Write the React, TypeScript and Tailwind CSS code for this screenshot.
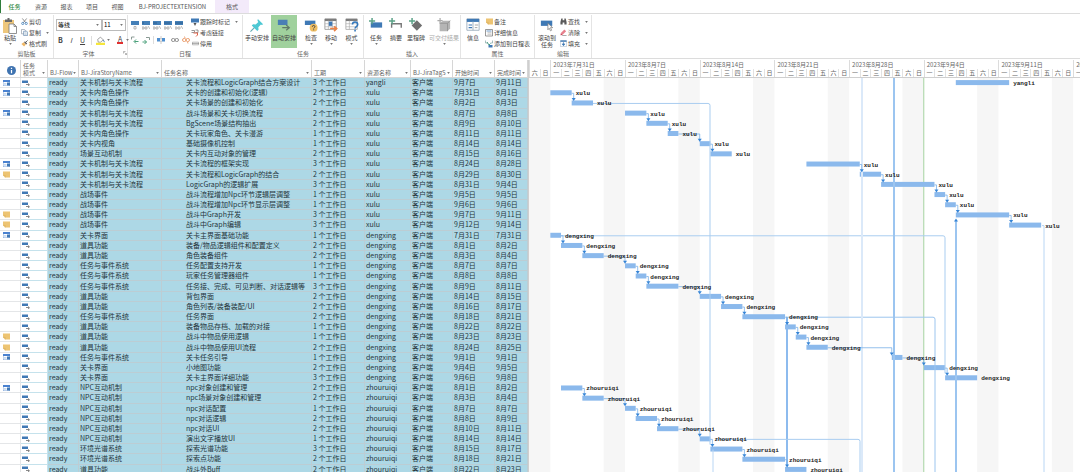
import React from "react";
import { clsx } from "clsx";

type Marker = "cal" | "note" | "";
type Task = {
  marker: Marker;
  story: string;
  name: string;
  days: number;
  owner: string;
  start: string;
  end: string;
};

const DAY = 10.67;
const ROW = 397 / 39;

const FLOW = "关卡机制与关卡流程";
const ROLE = "关卡内角色操作";
const EVENT = "任务与事件系统";
const ITEM = "道具功能";
const NPC = "NPC互动机制";

const RAW: [Marker, string, string, number, string, string, string][] = [
  ["cal", FLOW, "关卡流程和LogicGraph结合方案设计", 3, "yangli", "9/7", "9/11"],
  ["cal", ROLE, "关卡的创建和初始化(逻辑)", 2, "xulu", "7/31", "8/1"],
  ["", ROLE, "关卡场景的创建和初始化", 2, "xulu", "8/2", "8/3"],
  ["cal", FLOW, "战斗场景和关卡切换流程", 2, "xulu", "8/7", "8/8"],
  ["", FLOW, "BgScene场景结构抽出", 2, "xulu", "8/9", "8/10"],
  ["", ROLE, "关卡玩家角色、关卡漫游", 1, "xulu", "8/11", "8/11"],
  ["", "关卡内视角", "基础摄像机控制", 1, "xulu", "8/14", "8/14"],
  ["", "场景互动机制", "关卡内互动对象的管理", 2, "xulu", "8/15", "8/16"],
  ["cal", FLOW, "关卡流程的框架实现", 3, "xulu", "8/24", "8/28"],
  ["note", FLOW, "关卡流程和LogicGraph的结合", 2, "xulu", "8/29", "8/30"],
  ["", FLOW, "LogicGraph的逻辑扩展", 3, "xulu", "8/31", "9/4"],
  ["", "战场事件", "战斗流程增加Npc环节逻辑层调整", 1, "xulu", "9/5", "9/5"],
  ["", "战场事件", "战斗流程增加Npc环节显示层调整", 1, "xulu", "9/6", "9/6"],
  ["note", "战场事件", "战斗中Graph开发", 3, "xulu", "9/7", "9/11"],
  ["note", "战场事件", "战斗中Graph编辑", 3, "xulu", "9/12", "9/14"],
  ["cal", "关卡界面", "关卡主界面基础功能", 1, "dengxing", "7/31", "7/31"],
  ["", ITEM, "装备/物品逻辑组件和配置定义", 2, "dengxing", "8/1", "8/2"],
  ["", ITEM, "角色装备组件", 2, "dengxing", "8/3", "8/4"],
  ["", EVENT, "任务配置支持开发", 1, "dengxing", "8/7", "8/7"],
  ["", EVENT, "玩家任务管理器组件", 1, "dengxing", "8/8", "8/8"],
  ["", EVENT, "任务接、完成、可见判断、对话逻辑等", 3, "dengxing", "8/9", "8/11"],
  ["", ITEM, "背包界面", 2, "dengxing", "8/14", "8/15"],
  ["", ITEM, "角色列表/装备装配/UI", 2, "dengxing", "8/16", "8/17"],
  ["", EVENT, "任务界面", 2, "dengxing", "8/18", "8/21"],
  ["", ITEM, "装备物品存档、加载的对接", 1, "dengxing", "8/22", "8/22"],
  ["note", ITEM, "战斗中物品使用逻辑", 1, "dengxing", "8/23", "8/23"],
  ["note", ITEM, "战斗中物品使用UI流程", 2, "dengxing", "8/24", "8/25"],
  ["cal", EVENT, "关卡任务引导", 1, "dengxing", "9/1", "9/1"],
  ["", "关卡界面", "小地图功能", 2, "dengxing", "9/4", "9/5"],
  ["", "关卡界面", "关卡主界面详细功能", 3, "dengxing", "9/6", "9/8"],
  ["cal", NPC, "npc对象创建和管理", 2, "zhouruiqi", "8/1", "8/2"],
  ["", NPC, "npc场景对象创建和管理", 2, "zhouruiqi", "8/3", "8/4"],
  ["", NPC, "npc对话配置", 1, "zhouruiqi", "8/7", "8/7"],
  ["", NPC, "npc对话逻辑", 2, "zhouruiqi", "8/8", "8/9"],
  ["", NPC, "npc对话UI", 2, "zhouruiqi", "8/10", "8/11"],
  ["", NPC, "演出文字播放UI", 1, "zhouruiqi", "8/14", "8/14"],
  ["", "环境光谱系统", "探索光谱功能", 3, "zhouruiqi", "8/15", "8/17"],
  ["", "环境光谱系统", "探索点功能", 2, "zhouruiqi", "8/18", "8/21"],
  ["", ITEM, "战斗外Buff", 2, "zhouruiqi", "8/22", "8/23"],
];

const TASKS: Task[] = RAW.map(([marker, story, name, days, owner, start, end]) => ({
  marker, story, name, days, owner, start, end,
}));

// tasks that do not lead into the row below them
const CHAIN_ENDS = [0, 2, 7, 14, 29, 38];

const WEEKS = ["2023年7月31日", "2023年8月7日", "2023年8月14日", "2023年8月21日", "2023年8月28日", "2023年9月4日", "2023年9月11日", "2023年9月18日"];
const WEEKDAYS = ["一", "二", "三", "四", "五", "六", "日"];

const zhDate = (d: string) => d.replace("/", "月") + "日";

/** Days since Saturday 29 July, the first day on the time scale. */
const dayIndex = (d: string) => {
  const [m, n] = d.split("/").map(Number);
  return (m === 7 ? n : m === 8 ? n + 31 : n + 62) - 29;
};

/* ---------- small drawings ---------- */

const Caret = ({ className }: { className?: string }) => (
  <svg viewBox="0 0 4 3" className={clsx("h-[2px] w-[3px] shrink-0", className)} aria-hidden="true">
    <path d="M0 0h4L2 3z" fill="#777" />
  </svg>
);

const Svg = ({ className, box = "0 0 16 16", children }: { className?: string; box?: string; children: React.ReactNode }) => (
  <svg viewBox={box} className={clsx("shrink-0", className ?? "size-[7px]")} fill="none" aria-hidden="true">
    {children}
  </svg>
);

const PasteIcon = () => (
  <Svg className="h-4 w-[14px]" box="0 0 14 16">
    <path d="M0 2h11v13H0z" fill="#eec77c" />
    <path d="M2 1.500h2.500V0h2v1.500H9V4H2z" fill="#6a6a6a" />
    <path d="M6 6h5l2.500 2.500V15.500H6z" fill="#fff" stroke="#777" strokeWidth=".8" />
    <path d="M11 6v2.500h2.500" stroke="#777" strokeWidth=".8" />
  </Svg>
);
const CutIcon = () => (
  <Svg>
    <path d="M3 1l8 10M13 1L5 11" stroke="#777" strokeWidth="1.800" />
    <circle cx="4" cy="12.500" r="2.500" stroke="#3d7cb8" strokeWidth="1.800" />
    <circle cx="12" cy="12.500" r="2.500" stroke="#3d7cb8" strokeWidth="1.800" />
  </Svg>
);
const CopyIcon = () => (
  <Svg>
    <path d="M1 1h7l2 2v8H1z" fill="#fff" stroke="#8893a0" strokeWidth="1.500" />
    <path d="M6 5h7l2 2v8H6z" fill="#fff" stroke="#5b82a8" strokeWidth="1.500" />
    <path d="M8 9h5M8 12h5" stroke="#5b82a8" />
  </Svg>
);
const BrushIcon = () => (
  <Svg>
    <path d="M1 9l5-4 5 5-4 5z" fill="#eeb766" />
    <path d="M7 5l2-2 5 5-2 2z" fill="#555" />
    <path d="M11 5l4-4" stroke="#555" strokeWidth="2" />
  </Svg>
);
const PinIcon = () => (
  <Svg className="size-[14px]">
    <path d="M9 1l6 6-1.500 1-1-.5-3 3 .3 3-1.500 1.300L2 8.500 3.500 7l3 .5 3-3L8.500 3z" fill="#4dc8d4" />
    <path d="M5 11l-4.500 4.500" stroke="#62aab4" strokeWidth="1.300" />
  </Svg>
);
const AutoIcon = () => (
  <Svg className="size-[14px]">
    <path d="M1 2h11v6H1z" fill="#4a7fb5" />
    <path d="M6 11h7M10.500 8l3.500 3-3.500 3" stroke="#607a68" strokeWidth="1.500" />
  </Svg>
);
const InspectIcon = () => (
  <Svg className="size-[14px]">
    <path d="M1 3h12v5H1z" fill="#3f79b5" />
    <circle cx="11" cy="11" r="4.500" fill="#eebd62" />
    <path d="M9.500 10c0-2 3-2 3 0 0 1-1.500 1-1.500 2M11 13v1" stroke="#444" strokeWidth="1.100" />
  </Svg>
);
const CalendarArrowIcon = () => (
  <Svg className="size-[14px]">
    <path d="M1 1h13v12H1z" fill="#fff" stroke="#999" />
    <path d="M1 1h13v2.500H1z" fill="#7c7c7c" />
    <path d="M1 6.500h13M1 10h13M5 3v10M9.500 3v10" stroke="#aaa" strokeWidth=".7" />
    <path d="M5.500 4h4v5h-4z" fill="#3f79b5" />
    <path d="M7 12h7M11.500 9.500L14.500 12l-3 3" stroke="#ec8246" strokeWidth="1.800" />
  </Svg>
);
const ModeIcon = () => (
  <Svg className="size-[14px]">
    <path d="M1 1h13v12H1z" fill="#fff" stroke="#aaa" />
    <path d="M1 1h13v2.500H1z" fill="#7c7c7c" />
    <path d="M1 6.500h13M1 10h13M5 3v10" stroke="#aaa" strokeWidth=".7" />
    <path d="M8.500 7.500c0-4 6-4 6 0 0 2.500-3 2-3 4.500M11.500 13.500v2" stroke="#3277bb" strokeWidth="1.800" />
  </Svg>
);
const Plus = () => <path d="M3.500 0v7M0 3.500h7" stroke="#5aa287" strokeWidth="1.700" />;
const NewTaskIcon = () => (
  <Svg className="size-[14px]"><path d="M2 5h13v6H2z" fill="#3f79b5" /><Plus /></Svg>
);
const SummaryIcon = () => (
  <Svg className="size-[14px]"><path d="M3 11V6.500h11V11" stroke="#777" strokeWidth="1.600" /><Plus /></Svg>
);
const MilestoneIcon = () => (
  <Svg className="size-[14px]"><path d="M9 2.500l6 6-6 6-6-6z" fill="#6f6f6f" /><Plus /></Svg>
);
const DeliverableIcon = () => (
  <Svg className="size-[14px]">
    <path d="M3 6l4-3h8v9l-3 3H3z" fill="#b5b5b5" />
    <path d="M3 6h9v9M12 6l3-3" stroke="#929292" />
    <path d="M3.500 0v6M.5 3h6" stroke="#aaa" strokeWidth="1.400" />
  </Svg>
);
const InfoPanelIcon = () => (
  <Svg className="size-[14px]">
    <path d="M1 1h14v13H1z" fill="#fff" stroke="#9aabbb" />
    <path d="M1 1h14v3.500H1z" fill="#3f79b5" />
    <path d="M3 8h4M3 11h4" stroke="#3f79b5" strokeWidth="1.400" />
    <path d="M8 4v10" stroke="#9aabbb" />
    <path d="M10 8h4M10 11h3" stroke="#999" />
  </Svg>
);
const NoteIcon = () => (
  <Svg><path d="M0 1h16v14H5l-5-5z" fill="#edc473" /><path d="M0 10h5v5" stroke="#d3a75a" /></Svg>
);
const DetailIcon = () => (
  <Svg className="size-2">
    <path d="M1 1h14v13H1z" fill="#fff" stroke="#777" strokeWidth="1.500" />
    <path d="M3 4h10" stroke="#3f79b5" strokeWidth="1.500" /><path d="M5 7.500h8M5 10.500h8" stroke="#888" />
  </Svg>
);
const TimelineIcon = () => (
  <Svg className="size-2">
    <path d="M1 1v5h5M15 1v5h-4" stroke="#8aa" strokeWidth="1.500" />
    <path d="M4 4l4 6 3-3" stroke="#3f9b7c" strokeWidth="1.800" />
    <path d="M7 10h8v5H7z" fill="#3f79b5" />
  </Svg>
);
const ScrollIcon = () => (
  <Svg className="size-[14px]">
    <path d="M1 3h13v6H1z" fill="#3f79b5" />
    <path d="M9 6l5.500 5h-2.500l1.300 3-1.300.7-1.500-3L9 13.500z" fill="#fff" stroke="#777" strokeWidth=".8" />
  </Svg>
);
const FindIcon = () => (
  <Svg><path d="M3 1h3v4h4V1h3l2 8v6h-5v-5H6v5H1V9z" fill="#5a5a5a" /></Svg>
);
const ClearIcon = () => (
  <Svg><path d="M2 9l8-8 4 4-8 8z" fill="#e8808c" /><path d="M2 9l4 4-3 1H1z" fill="#c94a5c" /><path d="M5 15h10" stroke="#777" strokeWidth="1.500" /></Svg>
);
const FillIcon = () => (
  <Svg><path d="M1 2h14M1 15h14V2H1z" stroke="#8aa4bd" /><path d="M1 1h14v3H1z" fill="#3f79b5" /><path d="M8 5v6M5 9l3 4 3-4z" stroke="#3f79b5" strokeWidth="1.600" fill="#3f79b5" /></Svg>
);
const TrackIcon = () => (
  <Svg className="size-2"><path d="M0 1h16v8H0z" fill="#3f79b5" /><path d="M5 10h6l-3 6z" fill="#555" /></Svg>
);
const RespectIcon = () => (
  <Svg className="size-2"><path d="M1 3h6v4H1M9 2h5v5H9" stroke="#777" strokeWidth="1.500" /><path d="M5 8h8v4l-3 3" stroke="#e0624a" strokeWidth="2" /></Svg>
);
const InactiveIcon = () => (
  <Svg><path d="M1 5h14v6H1z" stroke="#888" strokeWidth="1.300" /><path d="M0 8h16" stroke="#888" strokeWidth="1.500" /></Svg>
);
const PercentIcon = ({ done }: { done: number }) => (
  <Svg className="h-[9px] w-2" box="0 0 8 9">
    <path d="M0 0h8v4H0z" fill="#4580b8" />
    <path d={done ? "M0 6h2v2H0zM3 6h2v2H3zM6 5l2 3" : "M3 5.500h2v2.500H3z"} stroke="#9a9a9a" strokeWidth=".7" />
    {done > 0 && <path d={`M0 2h${done / 12.5}`} stroke="#2e5f8f" />}
  </Svg>
);
const IndentIcon = ({ right }: { right?: boolean }) => (
  <Svg className="size-2">
    {right ? (
      <path d="M1 12h8M5 8l4 4-4 4" stroke="#4aa07a" strokeWidth="2" />
    ) : (
      <path d="M15 11H7M10 7l-4 4 4 4" stroke="#4aa07a" strokeWidth="2" />
    )}
    <path d={right ? "M8 3h7v5" : "M1 7V2h6"} stroke="#8a9a94" strokeWidth="2" />
  </Svg>
);
const SplitIcon = () => (
  <Svg className="size-2"><path d="M0 4h6v7H0zM10 4h6v7h-6z" fill="#4f8fd0" /><path d="M8 1v14" stroke="#555" strokeWidth="1.200" strokeDasharray="2 1" /></Svg>
);
const LinkIcon = ({ broken }: { broken?: boolean }) => (
  <Svg className="size-2">
    <rect x="1" y="5" width="7" height="6" rx="3" stroke={broken ? "#e58a52" : "#777"} strokeWidth="1.600" />
    <rect x="8" y="5" width="7" height="6" rx="3" stroke={broken ? "#e58a52" : "#777"} strokeWidth="1.600" />
    {broken && <path d="M5 1l1 3M11 12l1 3" stroke="#e58a52" strokeWidth="1.500" />}
  </Svg>
);
const BucketIcon = () => (
  <Svg className="size-[9px]"><path d="M3 6l5-4 5 5-5 4H4z" fill="#fff" stroke="#777" strokeWidth="1.200" /><path d="M13 7l2 4" stroke="#3f79b5" strokeWidth="1.500" /><path d="M0 12h16v4H0z" fill="#f5e63c" /></Svg>
);

/* ---------- ribbon ---------- */

const Group = ({ label, width, launcher, children }: { label: string; width: string; launcher?: boolean; children: React.ReactNode }) => (
  <section aria-label={label} className={clsx("flex shrink-0 flex-col border-r border-[#e4e4e4]", width)}>
    <div className="flex h-[34px]">{children}</div>
    <div className="flex h-2 items-center">
      <span className="flex-1 text-center text-[#666]">{label}</span>
      {launcher && (
        <button aria-label="字体设置" className="w-1">
          <Svg className="size-1"><path d="M2 10V2h8M6 6l8 8M14 8v6H8" stroke="#777" strokeWidth="2" /></Svg>
        </button>
      )}
    </div>
  </section>
);

type BigProps = { icon: React.ReactNode; label: string; caret?: boolean; active?: boolean; muted?: boolean; className: string };
const BigButton = ({ icon, label, caret, active, muted, className }: BigProps) => (
  <button className={clsx("flex h-[33px] shrink-0 flex-col items-center pt-[3px]", className, active && "bg-[#a0d19d]", muted ? "text-[#aaa]" : "text-[#444]")}>
    <span className="flex h-4 items-start">{icon}</span>
    <span className="whitespace-pre-line leading-[7px]">{label}</span>
    {caret && <Caret className="mt-[2px]" />}
  </button>
);

const SmallButton = ({ icon, label, caret }: { icon: React.ReactNode; label: string; caret?: boolean }) => (
  <button className="flex h-[11px] items-center gap-px text-[#444]">
    <span className="flex w-2 justify-center">{icon}</span>
    <span>{label}</span>
    {caret && <Caret className="ml-1" />}
  </button>
);

const SmallStack = ({ children }: { children: React.ReactNode }) => (
  <div className="flex flex-col pt-px">{children}</div>
);

const Ribbon = () => (
  <div className="flex h-[45px] overflow-hidden border-b border-[#dcdcdc] pt-px text-[6px] leading-[7px]">
    <Group label="剪贴板" width="w-[54px]">
      <BigButton icon={<PasteIcon />} label="粘贴" caret className="w-5" />
      <SmallStack>
        <SmallButton icon={<CutIcon />} label="剪切" />
        <SmallButton icon={<CopyIcon />} label="复制" caret />
        <SmallButton icon={<BrushIcon />} label="格式刷" />
      </SmallStack>
    </Group>
    <Group label="字体" width="w-[74px]" launcher>
      <div className="flex flex-col gap-1 px-[2px] pt-1">
        <div className="flex">
          {[["字体名称", "等线", "w-[46px]"], ["字号", "11", "w-6"]].map(([label, value, w]) => (
            <label key={label} className={clsx("relative flex items-center border border-[#bbb]", w)}>
              <select aria-label={label} className="h-[10px] w-full appearance-none pl-px text-[6px] leading-[8px] text-black">
                <option>{value}</option>
              </select>
              <Caret className="absolute right-[2px]" />
            </label>
          ))}
        </div>
        <div className="flex h-[10px] items-center gap-[7px] pl-[2px] text-[7px] text-[#444]">
          <button className="w-1 font-bold">B</button>
          <button className="w-1 italic">I</button>
          <button className="w-1 underline">U</button>
          <button aria-label="填充颜色" className="flex items-center gap-[2px] border-l border-[#ddd] pl-1"><BucketIcon /><Caret /></button>
          <button aria-label="字体颜色" className="flex items-center gap-[3px]"><span className="border-b-2 border-[#e03030] px-px leading-[6px]">A</span><Caret /></button>
        </div>
      </div>
    </Group>
    <Group label="日程" width="w-[115px]">
      <div className="flex w-[63px] flex-col gap-[6px] pl-[3px] pt-[6px]">
        <div className="flex gap-[3px]">
          {[0, 25, 50, 75, 100].map((n) => (
            <button key={n} aria-label={`完成 ${n}%`}><PercentIcon done={n} /></button>
          ))}
        </div>
        <div className="flex h-2 items-center gap-[3px]">
          <button aria-label="升级"><IndentIcon /></button>
          <button aria-label="降级"><IndentIcon right /></button>
          <button aria-label="拆分" className="border-l border-[#ddd] px-[3px]"><SplitIcon /></button>
          <button aria-label="链接"><LinkIcon /></button>
          <button aria-label="取消链接"><LinkIcon broken /></button>
        </div>
      </div>
      <SmallStack>
        <SmallButton icon={<TrackIcon />} label="跟踪时标记" caret />
        <SmallButton icon={<RespectIcon />} label="考虑链接" />
        <SmallButton icon={<InactiveIcon />} label="停用" />
      </SmallStack>
    </Group>
    <Group label="任务" width="w-[121px]">
      <BigButton icon={<PinIcon />} label="手动安排" className="w-7" />
      <BigButton icon={<AutoIcon />} label="自动安排" active className="w-[26px]" />
      <BigButton icon={<InspectIcon />} label="检查" caret className="ml-1 w-5" />
      <BigButton icon={<CalendarArrowIcon />} label="移动" caret className="w-5" />
      <BigButton icon={<ModeIcon />} label="模式" caret className="w-[21px]" />
    </Group>
    <Group label="插入" width="w-[97px]">
      <BigButton icon={<NewTaskIcon />} label="任务" caret className="w-6" />
      <BigButton icon={<SummaryIcon />} label="摘要" className="w-4" />
      <BigButton icon={<MilestoneIcon />} label="里程碑" className="w-6" />
      <BigButton icon={<DeliverableIcon />} label="可交付结果" caret muted className="w-8" />
    </Group>
    <Group label="属性" width="w-[74px]">
      <BigButton icon={<InfoPanelIcon />} label="信息" className="w-6" />
      <SmallStack>
        <SmallButton icon={<NoteIcon />} label="备注" />
        <SmallButton icon={<DetailIcon />} label="详细信息" />
        <SmallButton icon={<TimelineIcon />} label="添加到日程表" />
      </SmallStack>
    </Group>
    <Group label="编辑" width="w-[57px]">
      <BigButton icon={<ScrollIcon />} label={"滚动到\n任务"} className="w-6" />
      <SmallStack>
        <SmallButton icon={<FindIcon />} label="查找" caret />
        <SmallButton icon={<ClearIcon />} label="清除" caret />
        <SmallButton icon={<FillIcon />} label="填充" caret />
      </SmallStack>
    </Group>
  </div>
);

const Tabs = () => (
  <nav className="flex h-[14px] items-stretch border-b border-[#dcdcdc] text-[6px] leading-[13px] text-[#555]">
    <button className="w-7 border-l border-[#2f7d3c] font-medium text-[#2f8a3f]">任务</button>
    <button className="w-[26px]">资源</button>
    <button className="w-[25px]">报表</button>
    <button className="w-[26px]">项目</button>
    <button className="w-[25px]">视图</button>
    <button className="w-[85px]">BJ-PROJECTEXTENSION</button>
    <button className="w-[34px] bg-[#f3eafa]">格式</button>
  </nav>
);

/* ---------- task sheet ---------- */

const COLUMNS: [string, string][] = [
  ["标记", "w-[21px]"],
  ["任务\n模式", "w-[27px]"],
  ["BJ-Flow", "w-[31px]"],
  ["BJ-JiraStoryName", "w-[83px]"],
  ["任务名称", "w-[150px]"],
  ["工期", "w-[53px]"],
  ["资源名称", "w-[46px]"],
  ["BJ-JiraTagS", "w-[42px]"],
  ["开始时间", "w-[42px]"],
  ["完成时间", "w-[33px]"],
];

const MarkerIcon = ({ marker }: { marker: Marker }) => {
  if (marker === "note") return <NoteIcon />;
  if (marker === "cal")
    return (
      <Svg className="h-[6px] w-[7px]" box="0 0 14 12">
        <path d="M0 0h14v12H0z" fill="#fff" stroke="#5f8fd0" strokeWidth="1.500" />
        <path d="M0 0h14v4H0z" fill="#4a82d0" /><path d="M2 7h5M2 9.500h5" stroke="#8fb4e2" /><path d="M8 5h6v6H8z" fill="#4278b4" />
      </Svg>
    );
  return null;
};

const TaskSheet = () => (
  <table className="h-[415px] w-[528px] shrink-0 table-fixed border-separate border-spacing-0 text-left text-[7px] leading-[9px] text-[#26343a]">
    <thead>
      <tr>
        {COLUMNS.map(([title, width], i) => (
          <th key={title} scope="col" className={clsx("h-[18px] border-r border-b border-[#d6d6d6] bg-white p-0 align-bottom text-[6px] leading-[7px] font-normal text-[#666]", width)}>
            {i === 0 ? (
              <Svg className="mb-[2px] ml-[7px] size-[9px]">
                <title>标记</title>
                <circle cx="8" cy="8" r="8" fill="#3f73b0" />
                <path d="M8 7v6M8 3v2.200" stroke="#fff" strokeWidth="2.200" />
              </Svg>
            ) : (
              <div className="flex items-end justify-between pr-[2px] pb-px pl-[2px]">
                <span className="whitespace-pre">{title}</span>
                <Caret className="mb-[2px]" />
              </div>
            )}
          </th>
        ))}
      </tr>
    </thead>
    <tbody>
      {TASKS.map((t, i) => (
        <tr key={i} className="[&>td]:overflow-hidden [&>td]:border-r [&>td]:border-b [&>td]:border-[#bccdd4] [&>td]:bg-[#add8e6] [&>td]:py-0 [&>td]:pr-0 [&>td]:pl-px [&>td]:whitespace-nowrap">
          <td className="border-[#e4e6e8]! bg-white! pl-[3px]!"><MarkerIcon marker={t.marker} /></td>
          <td className="border-[#c5e2ec]! bg-white!">
            <Svg className="h-[6px] w-2" box="0 0 16 12">
              <path d="M0 1h12v5H0z" fill="#3f79b5" />
              <path d="M8 9h6M12 7l3 2.500-3 2.500" stroke="#666" strokeWidth="1.500" />
            </Svg>
          </td>
          <td>ready</td>
          <td>{t.story}</td>
          <td className="pl-6!">{t.name}</td>
          <td>{t.days} 个工作日</td>
          <td>{t.owner}</td>
          <td>客户端</td>
          <td>{zhDate(t.start)}</td>
          <td>{zhDate(t.end)}</td>
        </tr>
      ))}
    </tbody>
  </table>
);

/* ---------- gantt chart ---------- */

const rowY = (i: number) => i * ROW + ROW / 2;
const startX = (t: Task) => dayIndex(t.start) * DAY;
const endX = (t: Task) => (dayIndex(t.end) + 1) * DAY;

const Week = ({ label, days }: { label: string; days: string[] }) => (
  <div className="flex shrink-0 flex-col border-l border-[#dcdcdc]" style={{ width: days.length * DAY }}>
    <span className="h-[9px] pl-[2px] leading-[9px] whitespace-nowrap">{label}</span>
    <div className="flex">
      {days.map((d, i) => (
        <span key={d} className={clsx("flex-1 text-center leading-[8px]", i > 0 && "border-l border-[#e2e2e2]")}>{d}</span>
      ))}
    </div>
  </div>
);

const Link = ({ from, to, row }: { from: Task; to: Task; row: number }) => {
  const adjacent = startX(to) - endX(from) < 1;
  const x = adjacent ? endX(from) + 2 : startX(to);
  const y = rowY(row);
  const tip = rowY(row + 1) - 3;
  return (
    <g>
      <path d={`M${endX(from)} ${y}H${x}V${tip - 2}`} stroke="#78b0e8" fill="none" strokeWidth=".8" />
      <path d={`M${x - 2} ${tip - 2.5}h4l-2 3z`} fill="#3584d6" />
    </g>
  );
};

// long dependencies that run across many rows: path, colour, width
const RUNS: [string, string, number][] = [
  [`M64 ${rowY(2)}H179q2 0 2 2V${rowY(36) - 5}`, "#a9cdf0", 1],
  [`M32 ${rowY(15)}H414q2 0 2 2V${rowY(29) - 5}`, "#a9cdf0", 1],
  [`M257 ${rowY(23)}H404q2 0 2 2V400`, "#9cc5ee", 1],
  [`M258 ${rowY(23)}V${rowY(38) - 5}`, "#8dbbee", 2],
  [`M188 ${rowY(35)}H329q2 0 2 2V400`, "#a9cdf0", 1],
  [`M184 ${rowY(36)}V400`, "#b9d6f4", 1],
  ["M333 0V400", "#dbe9f9", 2],
  ["M365 0V400", "#9cc5f0", 2],
  [`M427 ${rowY(13) + 5}V400`, "#9cc5f0", 2],
  [`M513 ${rowY(14)}h2V400`, "#b9d6f4", 1],
];

const Gantt = () => (
  <div className="min-w-0 flex-1 overflow-hidden border-l border-[#cfcfcf]">
    <div className="flex h-[18px] overflow-hidden border-b border-[#cfcfcf] text-[6px] text-[#666]">
      <Week label="" days={["六", "日"]} />
      {WEEKS.map((w) => <Week key={w} label={w} days={WEEKDAYS} />)}
    </div>
    <svg className="h-[397px] w-full" role="img" aria-label="甘特图">
      {WEEKS.map((w, i) => (
        <rect key={w} x={i * 7 * DAY} y="0" width={2 * DAY} height="397" fill="#f6f6f6" />
      ))}
      <path d={`M${37 * DAY} 0V397`} stroke="#a5d3a0" />
      {TASKS.map((t, i) => (
        <rect key={i} x={startX(t)} y={rowY(i) - 3} width={endX(t) - startX(t)} height="5" fill="#8bb9ec" />
      ))}
      {RUNS.map(([d, stroke, width]) => (
        <path key={d} d={d} stroke={stroke} strokeWidth={width} fill="none" />
      ))}
      <path d={`M425 ${rowY(13) + 6}h4l-2-3z`} fill="#3584d6" />
      {TASKS.map((t, i) => !CHAIN_ENDS.includes(i) && <Link key={i} from={t} to={TASKS[i + 1]} row={i} />)}
      {TASKS.map((t, i) => (
        <text key={i} x={endX(t) + 4} y={rowY(i) + 2} fontSize="6" fontWeight="bold" fill="#1c1c1c" className="font-['Liberation_Mono',monospace]">
          {t.owner}
        </text>
      ))}
    </svg>
  </div>
);

export default function App() {
  return (
    <div className="flex h-screen flex-col overflow-hidden bg-white font-['Noto_Sans_CJK_SC',sans-serif]">
      <Tabs />
      <Ribbon />
      <main className="flex min-h-0 flex-1 items-start overflow-hidden pt-px">
        <TaskSheet />
        <Gantt />
      </main>
    </div>
  );
}
